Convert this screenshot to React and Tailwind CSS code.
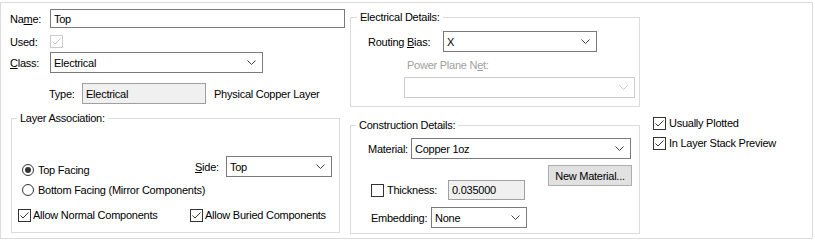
import React from "react";

const Chevron = ({ disabled }) => (
  <svg width="9" height="5" viewBox="0 0 9 5" className="shrink-0">
    <polyline
      points="0.5,0.5 4.5,4.5 8.5,0.5"
      fill="none"
      stroke={disabled ? "#c4c4c4" : "#404040"}
      strokeWidth="1"
    />
  </svg>
);

const Select = ({ value, className, disabled }) => (
  <div
    className={`h-[21px] flex items-center justify-between pl-[3px] pr-[6px] border bg-white ${
      disabled ? "border-[#cccccc]" : "border-[#7a7a7a]"
    } ${className}`}
  >
    <span>{value}</span>
    <Chevron disabled={disabled} />
  </div>
);

const Check = ({ checked = true, disabled }) => (
  <div
    className={`w-[13px] h-[13px] shrink-0 border bg-white flex items-center justify-center ${
      disabled ? "border-[#cccccc]" : "border-[#333333]"
    }`}
  >
    {checked && (
      <svg width="11" height="11" viewBox="0 0 11 11">
        <polyline
          points="1.5,5.5 4,8 9.5,2.5"
          fill="none"
          stroke={disabled ? "#c4c4c4" : "#333333"}
          strokeWidth="1"
        />
      </svg>
    )}
  </div>
);

const Radio = ({ checked }) => (
  <div className="w-[12px] h-[12px] shrink-0 rounded-full border border-[#333333] bg-white flex items-center justify-center">
    {checked && <div className="w-[6px] h-[6px] rounded-full bg-[#333333]" />}
  </div>
);

const App = () => {
  return (
    <div
      className="w-[815px] h-[242px] bg-white text-black text-[11px] tracking-[-0.25px] leading-[14px]"
      style={{ fontFamily: '"Liberation Sans", Arial, sans-serif' }}
    >
      <div className="mt-[2px] w-[813px] h-[237px] border border-[#dcdcdc] flex">
        {/* Left column */}
        <div className="w-[349px] flex flex-col">
          <div className="mt-[6px] h-[19px] pl-[9px] flex items-center">
            <span className="w-[40px]">
              Na<u>m</u>e:
            </span>
            <div className="w-[295px] h-[19px] border border-[#7a7a7a] pl-[3px] flex items-center">
              Top
            </div>
          </div>

          <div className="mt-[7px] h-[13px] pl-[9px] flex items-center">
            <span className="w-[40px]">Used:</span>
            <Check disabled />
          </div>

          <div className="mt-[4px] pl-[9px] flex items-center">
            <span className="w-[40px]">
              <u>C</u>lass:
            </span>
            <Select value="Electrical" className="w-[213px]" />
          </div>

          <div className="mt-[10px] h-[21px] pl-[48px] flex items-center">
            <span className="w-[33px]">Type:</span>
            <div className="w-[124px] h-[21px] border border-[#a0a0a0] bg-[#f0f0f0] pl-[3px] flex items-center">
              Electrical
            </div>
            <span className="ml-[8px]">Physical Copper Layer</span>
          </div>

          <fieldset className="mt-[7px] ml-[10px] w-[329px] h-[122px] border border-[#dcdcdc]">
            <legend className="ml-[5px] px-[3px]">Layer Association:</legend>
            <div className="mt-[31px] h-[22px] flex items-start">
              <div className="mt-[6px] h-[16px] w-[183px] pl-[10px] flex items-center">
                <Radio checked />
                <span className="ml-[4px]">Top Facing</span>
              </div>
              <div className="h-[21px] flex items-center">
                <span className="w-[31px]">
                  <u>S</u>ide:
                </span>
                <Select value="Top" className="w-[106px]" />
              </div>
            </div>
            <div className="mt-[4px] h-[16px] pl-[10px] flex items-center">
              <Radio />
              <span className="ml-[4px]">Bottom Facing (Mirror Components)</span>
            </div>
            <div className="mt-[9px] h-[16px] pl-[6px] flex items-center">
              <div className="w-[172px] flex items-center">
                <Check />
                <span className="ml-[2px]">Allow Normal Components</span>
              </div>
              <Check />
              <span className="ml-[2px]">Allow Buried Components</span>
            </div>
          </fieldset>
        </div>

        {/* Middle column */}
        <div className="w-[290px] flex flex-col">
          <fieldset className="mt-[7px] h-[97px] border border-[#dcdcdc]">
            <legend className="ml-[6px] px-[3px]">Electrical Details:</legend>
            <div className="mt-[7px] pl-[17px] flex items-center">
              <span className="w-[75px]">
                Routing <u>B</u>ias:
              </span>
              <Select value="X" className="w-[154px]" />
            </div>
            <div className="mt-[6px] h-[14px] pl-[56px] text-[#a0a0a0]">
              Power Plane N<u>e</u>t:
            </div>
            <div className="mt-[5px] pl-[53px]">
              <Select value="" disabled className="w-[231px]" />
            </div>
          </fieldset>

          <fieldset className="mt-[11px] h-[116px] border border-[#dcdcdc]">
            <legend className="ml-[5px] px-[3px]">Construction Details:</legend>
            <div className="mt-[6px] pl-[17px] flex items-center">
              <span className="w-[43px]">Material:</span>
              <Select value="Copper 1oz" className="w-[220px]" />
            </div>
            <div className="mt-[6px] flex items-start">
              <div className="w-[197px] pl-[20px] flex flex-col">
                <div className="mt-[15px] h-[20px] flex items-center">
                  <Check checked={false} />
                  <span className="ml-[3px] w-[61px]">Thickness:</span>
                  <div className="w-[77px] h-[20px] border border-[#a0a0a0] bg-[#f0f0f0] pl-[3px] flex items-center">
                    0.035000
                  </div>
                </div>
                <div className="mt-[7px] flex items-center">
                  <span className="w-[60px]">Embedding:</span>
                  <Select value="None" className="w-[96px]" />
                </div>
              </div>
              <button className="w-[84px] h-[21px] border border-[#adadad] bg-[#e1e1e1] flex items-center justify-center">
                New Material...
              </button>
            </div>
          </fieldset>
        </div>

        {/* Right column */}
        <div className="pl-[13px] flex flex-col">
          <div className="mt-[112px] h-[16px] flex items-center">
            <Check />
            <span className="ml-[3px]">Usually Plotted</span>
          </div>
          <div className="mt-[4px] h-[16px] flex items-center">
            <Check />
            <span className="ml-[3px]">In Layer Stack Preview</span>
          </div>
        </div>
      </div>
    </div>
  );
};

export default App;
